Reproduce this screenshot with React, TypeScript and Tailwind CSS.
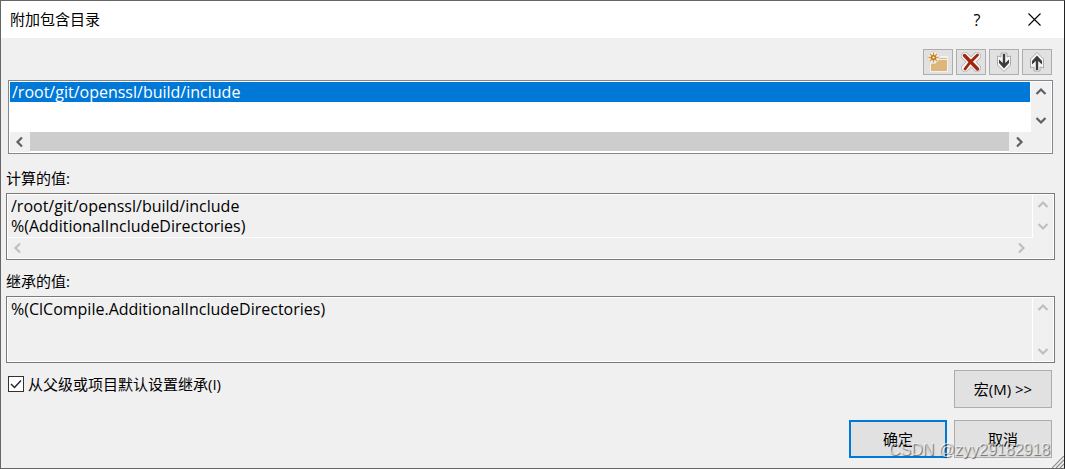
import { useState } from 'react';
import type { ReactNode } from 'react';
import clsx from 'clsx';

type Direction = 'up' | 'down' | 'left' | 'right';

const CHEVRONS: Record<Direction, string> = {
  up: 'M1.5 8 L6 3.5 L10.5 8',
  down: 'M1.5 4 L6 8.5 L10.5 4',
  left: 'M8 1.5 L3.5 6 L8 10.5',
  right: 'M4 1.5 L8.5 6 L4 10.5',
};

const directories = ['/root/git/openssl/build/include'];
const evaluated = ['/root/git/openssl/build/include', '%(AdditionalIncludeDirectories)'];
const inherited = ['%(ClCompile.AdditionalIncludeDirectories)'];

function ScrollButton({ direction, disabled }: { direction: Direction; disabled?: boolean }) {
  return (
    <button
      type="button"
      disabled={disabled}
      aria-label={direction}
      className={clsx('flex size-5 shrink-0 items-center justify-center', disabled ? 'text-[#bfbfbf]' : 'text-[#606060]')}
    >
      <svg width="12" height="12" viewBox="0 0 12 12" fill="none" stroke="currentColor" strokeWidth="2.2">
        <path d={CHEVRONS[direction]} />
      </svg>
    </button>
  );
}

function ToolButton({ label, children }: { label: string; children: ReactNode }) {
  return (
    <button
      type="button"
      aria-label={label}
      title={label}
      className="flex h-[26px] w-[30px] items-center justify-center border border-[#adadad] bg-[#e1e1e1]"
    >
      {children}
    </button>
  );
}

function DialogButton({ primary, children }: { primary?: boolean; children: ReactNode }) {
  return (
    <button
      type="button"
      className={clsx(
        'h-[38px] w-[98px] bg-[#e1e1e1] text-[15px]',
        primary ? 'border-2 border-[#0078d7]' : 'border border-[#adadad]',
      )}
    >
      {children}
    </button>
  );
}

function NewFolderIcon() {
  return (
    <svg width="22" height="22" viewBox="0 0 22 22">
      <path d="M3 8 H10 L12 5 H21 V21 H3 Z" fill="#f4f2ee" />
      <circle cx="6.5" cy="6.5" r="6" fill="#f4f2ee" stroke="#cfcbc4" strokeWidth="0.6" />
      <path d="M4 13 H8 L12 9 H20 V20 H4 Z" fill="#dcb67a" />
      <path d="M13 7 H20 V8 H12 Z" fill="#dcb67a" />
      <path d="M6.5 1.5 V11.5 M1.5 6.5 H11.5 M3 3 L10 10 M10 3 L3 10" stroke="#cf9440" strokeWidth="1.3" />
      <circle cx="6.5" cy="6.5" r="2.6" fill="#c27d1a" />
      <circle cx="6.5" cy="6.5" r="1.1" fill="#f4f2ee" />
    </svg>
  );
}

function DeleteIcon() {
  return (
    <svg width="20" height="20" viewBox="0 0 20 20" fill="none">
      <path d="M4 4 L16 16 M16 4 L4 16" stroke="#b4b4b4" strokeWidth="8" strokeLinecap="round" />
      <path d="M4 4 L16 16 M16 4 L4 16" stroke="#f6f6f6" strokeWidth="6.4" strokeLinecap="round" />
      <path d="M3.5 3.5 L16.5 17" stroke="#a1260d" strokeWidth="3.4" strokeLinecap="round" />
      <path d="M16.5 3 L9 10.5 L4 17" stroke="#a1260d" strokeWidth="2.8" strokeLinecap="round" />
    </svg>
  );
}

function ArrowIcon({ up }: { up?: boolean }) {
  return (
    <svg width="16" height="20" viewBox="0 0 16 20" className={up ? 'rotate-180' : undefined}>
      <path d="M5 1 H11 V5 L14.5 4 V13 L8 19.5 L1.5 13 V4 L5 5 Z" fill="#f6f6f6" stroke="#aaa" strokeWidth="1" />
      <path d="M6.8 2 H9.2 V11 L13 7.5 V11 L8 16.5 L3 11 V7.5 L6.8 11 Z" fill="#3c3c3c" />
    </svg>
  );
}

function ValueBox({ id, lines, horizontal }: { id: string; lines: string[]; horizontal?: boolean }) {
  return (
    <div className="flex h-[67px] border border-[#7a7a7a] p-px shadow-[inset_0_0_0_1px_#fff]">
      <div className="flex min-w-0 grow flex-col">
        <textarea
          id={id}
          readOnly
          wrap="off"
          value={lines.join('\n')}
          className="block min-h-0 w-full grow resize-none overflow-hidden border-r border-white px-[3px] pt-px text-base/5 outline-none"
        />
        {horizontal && (
          <div className="flex justify-between border-t border-white pr-0.5">
            <ScrollButton direction="left" disabled />
            <ScrollButton direction="right" disabled />
          </div>
        )}
      </div>
      <div className={clsx('flex flex-col justify-between', horizontal && 'pb-[22px]')}>
        <ScrollButton direction="up" disabled />
        <ScrollButton direction="down" disabled />
      </div>
    </div>
  );
}

export default function App() {
  const [inherit, setInherit] = useState(true);
  const [selected, setSelected] = useState(0);

  return (
    <div className="relative border border-[#666] border-r-[#222] bg-[#f0f0f0] font-['Open_Sans','Noto_Sans_CJK_SC',sans-serif] text-black">
      <header className="flex h-[37px] items-center justify-between bg-white pl-[9px] pr-2">
        <h1 className="text-[15px]">附加包含目录</h1>
        <div className="flex">
          <button type="button" aria-label="帮助" className="w-[70px] text-base">
            ?
          </button>
          <button type="button" aria-label="关闭" className="flex w-11 items-center justify-center">
            <svg width="13" height="13" viewBox="0 0 13 13" stroke="#000" strokeWidth="1.1">
              <path d="M0.5 0.5 L12.5 12.5 M12.5 0.5 L0.5 12.5" />
            </svg>
          </button>
        </div>
      </header>

      <main className="pt-[11px] pb-2.5">
        <div className="flex justify-end gap-[3px] pr-3">
          <ToolButton label="新行">
            <NewFolderIcon />
          </ToolButton>
          <ToolButton label="删除">
            <DeleteIcon />
          </ToolButton>
          <ToolButton label="下移">
            <ArrowIcon />
          </ToolButton>
          <ToolButton label="上移">
            <ArrowIcon up />
          </ToolButton>
        </div>

        <div className="mt-[5px] mr-[11px] ml-[7px] flex h-[74px] border border-[#828790] p-px shadow-[inset_0_0_0_1px_#fff]">
          <div className="flex min-w-0 grow flex-col">
            <ul role="listbox" aria-label="附加包含目录" className="grow border-r border-white bg-white">
              {directories.map((dir, i) => (
                <li
                  key={dir}
                  role="option"
                  aria-selected={selected === i}
                  onClick={() => setSelected(i)}
                  className={clsx('px-0.5 text-base/5', selected === i && 'bg-[#0078d7] text-white')}
                >
                  {dir}
                </li>
              ))}
            </ul>
            <div className="flex pr-0.5">
              <ScrollButton direction="left" />
              <div className="grow border-b border-white bg-[#cdcdcd]" />
              <ScrollButton direction="right" />
            </div>
          </div>
          <div className="flex flex-col justify-between pb-[22px]">
            <ScrollButton direction="up" />
            <ScrollButton direction="down" />
          </div>
        </div>

        <section className="mt-3.5 mr-[9px] ml-[5px]">
          <label htmlFor="evaluated" className="block h-[25px] text-[15px]/5">
            计算的值:
          </label>
          <ValueBox id="evaluated" lines={evaluated} horizontal />
        </section>

        <section className="mt-[11px] mr-[9px] ml-[5px]">
          <label htmlFor="inherited" className="block h-[25px] text-[15px]/5">
            继承的值:
          </label>
          <ValueBox id="inherited" lines={inherited} />
        </section>

        <div className="mt-[7px] flex items-start justify-between pr-3 pl-[7px]">
          <label className="mt-1 flex items-center gap-1 text-[15px]/5">
            <span className="grid size-4">
              <input
                type="checkbox"
                checked={inherit}
                onChange={(e) => setInherit(e.target.checked)}
                className="col-start-1 row-start-1 size-4 appearance-none border border-[#333] bg-white"
              />
              {inherit && (
                <svg viewBox="0 0 16 16" className="pointer-events-none col-start-1 row-start-1 size-4" fill="none" stroke="#222" strokeWidth="1.4">
                  <path d="M3 8 L6.5 11.5 L13 4.5" />
                </svg>
              )}
            </span>
            从父级或项目默认设置继承(I)
          </label>
          <DialogButton>宏(M) &gt;&gt;</DialogButton>
        </div>

        <div className="mt-3 flex justify-end gap-[7px] pr-3">
          <DialogButton primary>确定</DialogButton>
          <DialogButton>取消</DialogButton>
        </div>
      </main>

      <svg width="12" height="12" viewBox="0 0 12 12" className="absolute right-0 bottom-0" stroke="#8c8c8c" strokeWidth="1.2">
        <path d="M0 12 L12 0 M4 12 L12 4 M8 12 L12 8" />
      </svg>
      <span className="pointer-events-none absolute right-3.5 bottom-2 font-['Liberation_Sans',sans-serif] text-base/5 text-white/60 [text-shadow:1px_1px_1px_#0008]">
        CSDN @zyy29182918
      </span>
    </div>
  );
}
